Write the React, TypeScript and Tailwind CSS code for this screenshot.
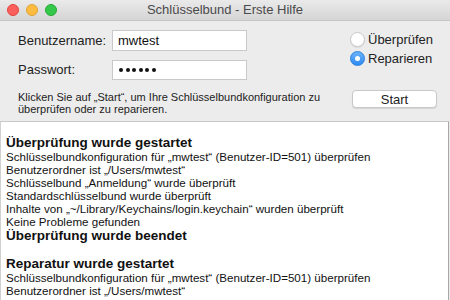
import React from "react";

const logLines: { text: string; bold?: boolean; blank?: boolean }[] = [
  { text: "Überprüfung wurde gestartet", bold: true },
  { text: "Schlüsselbundkonfiguration für „mwtest“ (Benutzer-ID=501) überprüfen" },
  { text: "Benutzerordner ist „/Users/mwtest“" },
  { text: "Schlüsselbund „Anmeldung“ wurde überprüft" },
  { text: "Standardschlüsselbund wurde überprüft" },
  { text: "Inhalte von „~/Library/Keychains/login.keychain“ wurden überprüft" },
  { text: "Keine Probleme gefunden" },
  { text: "Überprüfung wurde beendet", bold: true },
  { text: "", blank: true },
  { text: "Reparatur wurde gestartet", bold: true },
  { text: "Schlüsselbundkonfiguration für „mwtest“ (Benutzer-ID=501) überprüfen" },
  { text: "Benutzerordner ist „/Users/mwtest“" },
  { text: "Schlüsselbund „Anmeldung“ wurde überprüft" },
  { text: "Standardschlüsselbund wurde überprüft" },
];

const Radio = ({ checked, label }: { checked?: boolean; label: string }) => (
  <div className="flex items-center h-[19px]">
    {checked ? (
      <div className="w-[15px] h-[15px] rounded-full bg-gradient-to-b from-[#6cb3fa] to-[#2a8bf2] border border-[#2b7fe0] flex items-center justify-center">
        <div className="w-[5px] h-[5px] rounded-full bg-white" />
      </div>
    ) : (
      <div className="w-[15px] h-[15px] rounded-full bg-white border border-[#c8c8c8] shadow-[0_1px_1px_rgba(0,0,0,0.08)]" />
    )}
    <span className="ml-[3px] text-[13px] text-[#222]">{label}</span>
  </div>
);

const App = () => {
  return (
    <div
      className="w-[450px] h-[300px] overflow-hidden bg-[#ececec] flex flex-col"
      style={{ fontFamily: '"Liberation Sans", Arial, sans-serif' }}
    >
      {/* title bar */}
      <div className="h-[21px] shrink-0 flex items-center relative bg-gradient-to-b from-[#ebeaeb] to-[#d6d5d6] border-b border-[#c6c6c6]">
        <div className="flex items-center gap-[7px] pl-[7px]">
          <div className="w-[12px] h-[12px] rounded-full bg-[#fc605c] border border-[#e0443e]" />
          <div className="w-[12px] h-[12px] rounded-full bg-[#fdbc40] border border-[#dea236]" />
          <div className="w-[12px] h-[12px] rounded-full bg-[#34c84a] border border-[#27aa35]" />
        </div>
        <div className="absolute inset-0 flex items-center justify-center text-[13px] text-[#4a4a4a]">
          Schlüsselbund - Erste Hilfe
        </div>
      </div>

      {/* form */}
      <div className="h-[100px] shrink-0 flex">
        <div className="pl-[18px] pt-[9px] w-[335px]">
          <div className="flex items-center h-[21px]">
            <span className="w-[94px] text-[13px] text-[#222]">Benutzername:</span>
            <div className="w-[135px] h-[21px] bg-white border border-[#c9c9c9] flex items-center pl-[5px] text-[13px] text-[#111]">
              mwtest
            </div>
          </div>
          <div className="flex items-center h-[20px] mt-[9px]">
            <span className="w-[94px] text-[13px] text-[#222]">Passwort:</span>
            <div className="w-[135px] h-[20px] bg-white border border-[#c9c9c9] flex items-center gap-[2.5px] pl-[6px]">
              {[0, 1, 2, 3, 4, 5].map((d) => (
                <div key={d} className="w-[4px] h-[4px] rounded-full bg-[#111]" />
              ))}
            </div>
          </div>
          <p className="mt-[11px] text-[11px] leading-[12px] text-[#222]">
            Klicken Sie auf „Start“, um Ihre Schlüsselbundkonfiguration zu überprüfen oder zu reparieren.
          </p>
        </div>
        <div className="pt-[9px] pl-[15px] flex flex-col">
          <Radio label="Überprüfen" />
          <Radio label="Reparieren" checked />
          <button className="mt-[22px] ml-[2px] w-[85px] h-[18px] bg-white border border-[#c8c8c8] rounded-[4px] shadow-[0_1px_1px_rgba(0,0,0,0.1)] text-[13px] leading-none text-[#222]">
            Start
          </button>
        </div>
      </div>

      {/* log */}
      <div className="flex-1 w-[449px] bg-white border-t border-[#c9c9c9] border-l border-l-[#d0d0d0] border-r border-r-[#a8a8a8] pt-[13px] pl-[5px] overflow-hidden">
        {logLines.map((l, i) =>
          l.blank ? (
            <div key={i} className="h-[13px]" />
          ) : l.bold ? (
            <div key={i} className="text-[13.5px] leading-[15px] font-bold text-[#111] whitespace-nowrap">
              {l.text}
            </div>
          ) : (
            <div key={i} className="text-[11.6px] leading-[13px] text-[#111] whitespace-nowrap">
              {l.text}
            </div>
          )
        )}
      </div>
    </div>
  );
};

export default App;
